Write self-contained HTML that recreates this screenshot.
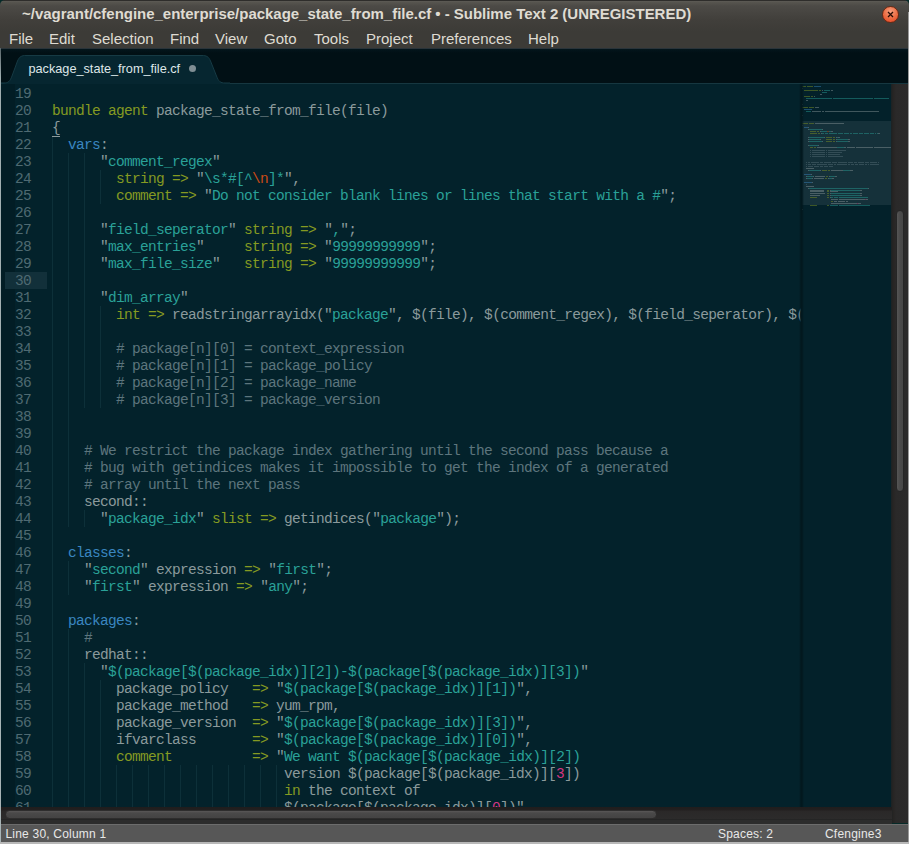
<!DOCTYPE html>
<html><head><meta charset="utf-8">
<style>
*{margin:0;padding:0;box-sizing:border-box}
html,body{width:909px;height:844px;overflow:hidden;background:#062a28}
body{position:relative;font-family:"Liberation Sans",sans-serif}
#title{position:absolute;left:0;top:0;width:909px;height:49px;background:linear-gradient(#2e2d2b 0px,#2e2d2b 1px,#5e5c57 1px,#57554f 2px,#4c4a46 6px,#413f3b 20px,#3c3b37 32px,#3c3b37 48px,#2a343a 48px,#2a343a 49px);border-radius:5px 5px 0 0}
#title span{position:absolute;left:22px;top:4.5px;font-size:15px;font-weight:700;color:#dfdbd2;white-space:pre;letter-spacing:-0.025px}
#close{position:absolute;left:882px;top:6px;width:17px;height:17px;border-radius:50%;background:radial-gradient(circle at 50% 30%,#f7a080,#ec6a40 55%,#e84a2a 90%);border:1px solid #6a2a14}
#close svg{position:absolute;left:3px;top:3px}
#menu{position:absolute;left:0;top:28px;width:909px;height:20px}
#menu span{position:absolute;top:2px;font-size:15px;color:#dfdbd2;white-space:pre}
#tabbar{position:absolute;left:1px;top:49px;width:907px;height:35px;background:linear-gradient(#03161c,#011015 4px,#011015)}
#tabline{position:absolute;left:1px;top:83px;width:907px;height:1px;background:#163740}
#tab{position:absolute;left:0;top:55px}
#tablabel{position:absolute;left:28.5px;top:61.5px;font-size:12.7px;color:#dfe6e8;white-space:pre}
#tabdot{position:absolute;left:189px;top:65px;width:7px;height:7px;border-radius:50%;background:#7f8e94}
#editor{position:absolute;left:1px;top:84px;width:907px;height:723px;background:#03222b;overflow:hidden}
.ln{position:absolute;left:0;width:30px;height:17px;padding-top:1px;text-align:right;font-family:"Liberation Mono",monospace;font-size:14.5px;letter-spacing:-0.7px;line-height:17px;color:#4f6a72}
.hl{position:absolute;left:4px;width:42px;height:17px;background:#12303a}
#gdark{position:absolute;left:0;top:0;width:14px;height:725px;background:#021d25}
.cl{position:absolute;left:51px;height:17px;padding-top:1px;font-family:"Liberation Mono",monospace;font-size:14.5px;letter-spacing:-0.7px;line-height:17px;white-space:pre;color:#8b9a9c}
.gd{position:absolute;width:1px;height:17px;background:#0d3039}
.t{color:#8b9a9c}.k{color:#859a22}.b{color:#3a86c0}.s{color:#2aa198}.c{color:#5d757d}.o{color:#cb4b16}.m{color:#d33682}
.u{color:#8b9a9c;border-bottom:1px solid #8b9a9c}
#mini{position:absolute;left:801px;top:84px;width:91px;height:723px;background:#03212a;overflow:hidden}
#mdiv{position:absolute;left:799px;top:84px;width:5px;height:723px;background:linear-gradient(to right,rgba(2,20,26,0),#02181e 40%,#02181e 60%,rgba(2,20,26,0))}
#mhl{position:absolute;left:1px;top:37px;width:90px;height:84px;background:#15313a}
#minner{position:absolute;left:1px;top:0;width:90px;height:725px}
#minner i{position:absolute;height:1px;opacity:0.45}
.ml{position:absolute;left:0;height:17px;font-family:"Liberation Mono",monospace;font-size:14.5px;letter-spacing:-0.7px;line-height:17px;white-space:pre;font-weight:700}
#vscroll{position:absolute;left:891px;top:84px;width:17px;height:739px;background:linear-gradient(to right,#1a2224,#262423 2px,#2a2929 5px,#2b2a2a)}
#vthumb{position:absolute;left:896px;top:210px;width:8px;height:282px;border-radius:4px;background:linear-gradient(to right,#555,#4a4a4a 3px,#474747);border:1px solid #262626}
#hscroll{position:absolute;left:1px;top:807px;width:891px;height:17px;background:linear-gradient(#1f1d1d,#221f1f 3px,#2a2828 4px,#2c2b2b 12px,#1e1e1e 12px,#2c2c2c 13px)}
#hthumb{position:absolute;left:5px;top:810px;width:652px;height:9px;border-radius:4.5px;background:linear-gradient(#5a5858,#4a4949 2px,#444343);border:1px solid #2e2d2d}
#status{position:absolute;left:1px;top:824px;width:907px;height:19px;background:#575757;border-top:1px solid #6c6c6c}
#status span{position:absolute;top:1.5px;font-size:12px;letter-spacing:0.2px;color:#e8e8e8;white-space:pre}
#lb{position:absolute;left:0;top:48px;width:1px;height:796px;background:linear-gradient(#5a666a,#a0aeb0 30px,#a8b4b6)}
#rb{position:absolute;left:908px;top:12px;width:1px;height:832px;background:#9a9a9a}
#bb{position:absolute;left:0;top:842px;width:909px;height:2px;background:#b8b8b8}
</style></head><body>
<div id="title"><span>~/vagrant/cfengine_enterprise/package_state_from_file.cf • - Sublime Text 2 (UNREGISTERED)</span></div>
<div id="close"><svg width="9" height="9" viewBox="0 0 9 9"><path d="M2 2L7 7M7 2L2 7" stroke="#2a0c04" stroke-width="1.3"/></svg></div>
<div id="menu">
<span style="left:9px">File</span><span style="left:49px">Edit</span><span style="left:92px">Selection</span><span style="left:170px">Find</span><span style="left:215px">View</span><span style="left:264px">Goto</span><span style="left:314px">Tools</span><span style="left:366px">Project</span><span style="left:431px">Preferences</span><span style="left:528px">Help</span>
</div>
<div id="tabbar"></div>
<div id="tabline"></div>
<svg id="tab" width="230" height="30" viewBox="0 0 230 30"><path d="M0 28 L4 28 C8 28 10 26.5 12 21 L17.5 6 C19.5 1.5 21.5 0.5 26 0.5 L202 0.5 C206.5 0.5 208.5 1.5 210.5 6 L216.5 21 C218.5 26.5 220.5 28 225 28 L232 28 L232 31 L0 31 Z" fill="#062630" stroke="#163a44" stroke-width="1"/></svg>
<div id="tablabel">package_state_from_file.cf</div>
<div id="tabdot"></div>
<div id="editor">
<div id="gdark"></div>
<div class="gd" style="left:51px;top:52px"></div>
<div class="gd" style="left:51px;top:69px"></div>
<div class="gd" style="left:67px;top:69px"></div>
<div class="gd" style="left:83px;top:69px"></div>
<div class="gd" style="left:51px;top:86px"></div>
<div class="gd" style="left:67px;top:86px"></div>
<div class="gd" style="left:83px;top:86px"></div>
<div class="gd" style="left:99px;top:86px"></div>
<div class="gd" style="left:51px;top:103px"></div>
<div class="gd" style="left:67px;top:103px"></div>
<div class="gd" style="left:83px;top:103px"></div>
<div class="gd" style="left:99px;top:103px"></div>
<div class="gd" style="left:51px;top:120px"></div>
<div class="gd" style="left:67px;top:120px"></div>
<div class="gd" style="left:83px;top:120px"></div>
<div class="gd" style="left:51px;top:137px"></div>
<div class="gd" style="left:67px;top:137px"></div>
<div class="gd" style="left:83px;top:137px"></div>
<div class="gd" style="left:51px;top:154px"></div>
<div class="gd" style="left:67px;top:154px"></div>
<div class="gd" style="left:83px;top:154px"></div>
<div class="gd" style="left:51px;top:171px"></div>
<div class="gd" style="left:67px;top:171px"></div>
<div class="gd" style="left:83px;top:171px"></div>
<div class="gd" style="left:51px;top:188px"></div>
<div class="gd" style="left:67px;top:188px"></div>
<div class="gd" style="left:83px;top:188px"></div>
<div class="gd" style="left:51px;top:205px"></div>
<div class="gd" style="left:67px;top:205px"></div>
<div class="gd" style="left:83px;top:205px"></div>
<div class="gd" style="left:51px;top:222px"></div>
<div class="gd" style="left:67px;top:222px"></div>
<div class="gd" style="left:83px;top:222px"></div>
<div class="gd" style="left:99px;top:222px"></div>
<div class="gd" style="left:51px;top:239px"></div>
<div class="gd" style="left:67px;top:239px"></div>
<div class="gd" style="left:83px;top:239px"></div>
<div class="gd" style="left:99px;top:239px"></div>
<div class="gd" style="left:51px;top:256px"></div>
<div class="gd" style="left:67px;top:256px"></div>
<div class="gd" style="left:83px;top:256px"></div>
<div class="gd" style="left:99px;top:256px"></div>
<div class="gd" style="left:51px;top:273px"></div>
<div class="gd" style="left:67px;top:273px"></div>
<div class="gd" style="left:83px;top:273px"></div>
<div class="gd" style="left:99px;top:273px"></div>
<div class="gd" style="left:51px;top:290px"></div>
<div class="gd" style="left:67px;top:290px"></div>
<div class="gd" style="left:83px;top:290px"></div>
<div class="gd" style="left:99px;top:290px"></div>
<div class="gd" style="left:51px;top:307px"></div>
<div class="gd" style="left:67px;top:307px"></div>
<div class="gd" style="left:83px;top:307px"></div>
<div class="gd" style="left:99px;top:307px"></div>
<div class="gd" style="left:51px;top:324px"></div>
<div class="gd" style="left:67px;top:324px"></div>
<div class="gd" style="left:51px;top:341px"></div>
<div class="gd" style="left:67px;top:341px"></div>
<div class="gd" style="left:51px;top:358px"></div>
<div class="gd" style="left:67px;top:358px"></div>
<div class="gd" style="left:51px;top:375px"></div>
<div class="gd" style="left:67px;top:375px"></div>
<div class="gd" style="left:51px;top:392px"></div>
<div class="gd" style="left:67px;top:392px"></div>
<div class="gd" style="left:51px;top:409px"></div>
<div class="gd" style="left:67px;top:409px"></div>
<div class="gd" style="left:51px;top:426px"></div>
<div class="gd" style="left:67px;top:426px"></div>
<div class="gd" style="left:83px;top:426px"></div>
<div class="gd" style="left:51px;top:443px"></div>
<div class="gd" style="left:51px;top:460px"></div>
<div class="gd" style="left:51px;top:477px"></div>
<div class="gd" style="left:67px;top:477px"></div>
<div class="gd" style="left:51px;top:494px"></div>
<div class="gd" style="left:67px;top:494px"></div>
<div class="gd" style="left:51px;top:511px"></div>
<div class="gd" style="left:51px;top:528px"></div>
<div class="gd" style="left:51px;top:545px"></div>
<div class="gd" style="left:67px;top:545px"></div>
<div class="gd" style="left:51px;top:562px"></div>
<div class="gd" style="left:67px;top:562px"></div>
<div class="gd" style="left:51px;top:579px"></div>
<div class="gd" style="left:67px;top:579px"></div>
<div class="gd" style="left:83px;top:579px"></div>
<div class="gd" style="left:51px;top:596px"></div>
<div class="gd" style="left:67px;top:596px"></div>
<div class="gd" style="left:83px;top:596px"></div>
<div class="gd" style="left:99px;top:596px"></div>
<div class="gd" style="left:51px;top:613px"></div>
<div class="gd" style="left:67px;top:613px"></div>
<div class="gd" style="left:83px;top:613px"></div>
<div class="gd" style="left:99px;top:613px"></div>
<div class="gd" style="left:51px;top:630px"></div>
<div class="gd" style="left:67px;top:630px"></div>
<div class="gd" style="left:83px;top:630px"></div>
<div class="gd" style="left:99px;top:630px"></div>
<div class="gd" style="left:51px;top:647px"></div>
<div class="gd" style="left:67px;top:647px"></div>
<div class="gd" style="left:83px;top:647px"></div>
<div class="gd" style="left:99px;top:647px"></div>
<div class="gd" style="left:51px;top:664px"></div>
<div class="gd" style="left:67px;top:664px"></div>
<div class="gd" style="left:83px;top:664px"></div>
<div class="gd" style="left:99px;top:664px"></div>
<div class="gd" style="left:51px;top:681px"></div>
<div class="gd" style="left:67px;top:681px"></div>
<div class="gd" style="left:83px;top:681px"></div>
<div class="gd" style="left:99px;top:681px"></div>
<div class="gd" style="left:115px;top:681px"></div>
<div class="gd" style="left:131px;top:681px"></div>
<div class="gd" style="left:147px;top:681px"></div>
<div class="gd" style="left:163px;top:681px"></div>
<div class="gd" style="left:179px;top:681px"></div>
<div class="gd" style="left:195px;top:681px"></div>
<div class="gd" style="left:211px;top:681px"></div>
<div class="gd" style="left:227px;top:681px"></div>
<div class="gd" style="left:243px;top:681px"></div>
<div class="gd" style="left:259px;top:681px"></div>
<div class="gd" style="left:275px;top:681px"></div>
<div class="gd" style="left:51px;top:698px"></div>
<div class="gd" style="left:67px;top:698px"></div>
<div class="gd" style="left:83px;top:698px"></div>
<div class="gd" style="left:99px;top:698px"></div>
<div class="gd" style="left:115px;top:698px"></div>
<div class="gd" style="left:131px;top:698px"></div>
<div class="gd" style="left:147px;top:698px"></div>
<div class="gd" style="left:163px;top:698px"></div>
<div class="gd" style="left:179px;top:698px"></div>
<div class="gd" style="left:195px;top:698px"></div>
<div class="gd" style="left:211px;top:698px"></div>
<div class="gd" style="left:227px;top:698px"></div>
<div class="gd" style="left:243px;top:698px"></div>
<div class="gd" style="left:259px;top:698px"></div>
<div class="gd" style="left:275px;top:698px"></div>
<div class="gd" style="left:51px;top:715px"></div>
<div class="gd" style="left:67px;top:715px"></div>
<div class="gd" style="left:83px;top:715px"></div>
<div class="gd" style="left:99px;top:715px"></div>
<div class="gd" style="left:115px;top:715px"></div>
<div class="gd" style="left:131px;top:715px"></div>
<div class="gd" style="left:147px;top:715px"></div>
<div class="gd" style="left:163px;top:715px"></div>
<div class="gd" style="left:179px;top:715px"></div>
<div class="gd" style="left:195px;top:715px"></div>
<div class="gd" style="left:211px;top:715px"></div>
<div class="gd" style="left:227px;top:715px"></div>
<div class="gd" style="left:243px;top:715px"></div>
<div class="gd" style="left:259px;top:715px"></div>
<div class="gd" style="left:275px;top:715px"></div>
<div class="ln" style="top:1px">19</div>
<div class="ln" style="top:18px">20</div>
<div class="ln" style="top:35px">21</div>
<div class="ln" style="top:52px">22</div>
<div class="ln" style="top:69px">23</div>
<div class="ln" style="top:86px">24</div>
<div class="ln" style="top:103px">25</div>
<div class="ln" style="top:120px">26</div>
<div class="ln" style="top:137px">27</div>
<div class="ln" style="top:154px">28</div>
<div class="ln" style="top:171px">29</div>
<div class="hl" style="top:188px"></div>
<div class="ln" style="top:188px">30</div>
<div class="ln" style="top:205px">31</div>
<div class="ln" style="top:222px">32</div>
<div class="ln" style="top:239px">33</div>
<div class="ln" style="top:256px">34</div>
<div class="ln" style="top:273px">35</div>
<div class="ln" style="top:290px">36</div>
<div class="ln" style="top:307px">37</div>
<div class="ln" style="top:324px">38</div>
<div class="ln" style="top:341px">39</div>
<div class="ln" style="top:358px">40</div>
<div class="ln" style="top:375px">41</div>
<div class="ln" style="top:392px">42</div>
<div class="ln" style="top:409px">43</div>
<div class="ln" style="top:426px">44</div>
<div class="ln" style="top:443px">45</div>
<div class="ln" style="top:460px">46</div>
<div class="ln" style="top:477px">47</div>
<div class="ln" style="top:494px">48</div>
<div class="ln" style="top:511px">49</div>
<div class="ln" style="top:528px">50</div>
<div class="ln" style="top:545px">51</div>
<div class="ln" style="top:562px">52</div>
<div class="ln" style="top:579px">53</div>
<div class="ln" style="top:596px">54</div>
<div class="ln" style="top:613px">55</div>
<div class="ln" style="top:630px">56</div>
<div class="ln" style="top:647px">57</div>
<div class="ln" style="top:664px">58</div>
<div class="ln" style="top:681px">59</div>
<div class="ln" style="top:698px">60</div>
<div class="ln" style="top:715px">61</div>
<div class="cl" style="top:18px"><span class="k">bundle agent</span><span class="t"> package_state_from_file(file)</span></div>
<div class="cl" style="top:35px"><span class="u">{</span></div>
<div class="cl" style="top:52px"><span class="t">  </span><span class="b">vars</span><span class="t">:</span></div>
<div class="cl" style="top:69px"><span class="t">      </span><span class="t">&quot;</span><span class="s">comment_regex</span><span class="t">&quot;</span></div>
<div class="cl" style="top:86px"><span class="t">        </span><span class="k">string =&gt;</span><span class="t"> </span><span class="t">&quot;</span><span class="s">\s*#[^</span><span class="o">\n</span><span class="s">]*</span><span class="t">&quot;</span><span class="t">,</span></div>
<div class="cl" style="top:103px"><span class="t">        </span><span class="k">comment =&gt;</span><span class="t"> </span><span class="t">&quot;</span><span class="s">Do not consider blank lines or lines that start with a #</span><span class="t">&quot;</span><span class="t">;</span></div>
<div class="cl" style="top:137px"><span class="t">      </span><span class="t">&quot;</span><span class="s">field_seperator</span><span class="t">&quot;</span><span class="t"> </span><span class="k">string =&gt;</span><span class="t"> </span><span class="t">&quot;</span><span class="s">,</span><span class="t">&quot;</span><span class="t">;</span></div>
<div class="cl" style="top:154px"><span class="t">      </span><span class="t">&quot;</span><span class="s">max_entries</span><span class="t">&quot;</span><span class="t">     </span><span class="k">string =&gt;</span><span class="t"> </span><span class="t">&quot;</span><span class="s">99999999999</span><span class="t">&quot;</span><span class="t">;</span></div>
<div class="cl" style="top:171px"><span class="t">      </span><span class="t">&quot;</span><span class="s">max_file_size</span><span class="t">&quot;</span><span class="t">   </span><span class="k">string =&gt;</span><span class="t"> </span><span class="t">&quot;</span><span class="s">99999999999</span><span class="t">&quot;</span><span class="t">;</span></div>
<div class="cl" style="top:205px"><span class="t">      </span><span class="t">&quot;</span><span class="s">dim_array</span><span class="t">&quot;</span></div>
<div class="cl" style="top:222px"><span class="t">        </span><span class="k">int =&gt;</span><span class="t"> readstringarrayidx(</span><span class="t">&quot;</span><span class="s">package</span><span class="t">&quot;</span><span class="t">, $(file), $(comment_regex), $(field_seperator), $(</span></div>
<div class="cl" style="top:256px"><span class="t">        </span><span class="c"># package[n][0] = context_expression</span></div>
<div class="cl" style="top:273px"><span class="t">        </span><span class="c"># package[n][1] = package_policy</span></div>
<div class="cl" style="top:290px"><span class="t">        </span><span class="c"># package[n][2] = package_name</span></div>
<div class="cl" style="top:307px"><span class="t">        </span><span class="c"># package[n][3] = package_version</span></div>
<div class="cl" style="top:358px"><span class="t">    </span><span class="c"># We restrict the package index gathering until the second pass because a</span></div>
<div class="cl" style="top:375px"><span class="t">    </span><span class="c"># bug with getindices makes it impossible to get the index of a generated</span></div>
<div class="cl" style="top:392px"><span class="t">    </span><span class="c"># array until the next pass</span></div>
<div class="cl" style="top:409px"><span class="t">    second::</span></div>
<div class="cl" style="top:426px"><span class="t">      </span><span class="t">&quot;</span><span class="s">package_idx</span><span class="t">&quot;</span><span class="t"> </span><span class="k">slist =&gt;</span><span class="t"> getindices(</span><span class="t">&quot;</span><span class="s">package</span><span class="t">&quot;</span><span class="t">);</span></div>
<div class="cl" style="top:460px"><span class="t">  </span><span class="b">classes</span><span class="t">:</span></div>
<div class="cl" style="top:477px"><span class="t">    </span><span class="t">&quot;</span><span class="s">second</span><span class="t">&quot;</span><span class="t"> expression </span><span class="k">=&gt;</span><span class="t"> </span><span class="t">&quot;</span><span class="s">first</span><span class="t">&quot;</span><span class="t">;</span></div>
<div class="cl" style="top:494px"><span class="t">    </span><span class="t">&quot;</span><span class="s">first</span><span class="t">&quot;</span><span class="t"> expression </span><span class="k">=&gt;</span><span class="t"> </span><span class="t">&quot;</span><span class="s">any</span><span class="t">&quot;</span><span class="t">;</span></div>
<div class="cl" style="top:528px"><span class="t">  </span><span class="b">packages</span><span class="t">:</span></div>
<div class="cl" style="top:545px"><span class="t">    </span><span class="c">#</span></div>
<div class="cl" style="top:562px"><span class="t">    redhat::</span></div>
<div class="cl" style="top:579px"><span class="t">      </span><span class="t">&quot;</span><span class="s">$(package[$(package_idx)][2])-$(package[$(package_idx)][3])</span><span class="t">&quot;</span></div>
<div class="cl" style="top:596px"><span class="t">        package_policy   </span><span class="k">=&gt;</span><span class="t"> </span><span class="t">&quot;</span><span class="s">$(package[$(package_idx)][1])</span><span class="t">&quot;</span><span class="t">,</span></div>
<div class="cl" style="top:613px"><span class="t">        package_method   </span><span class="k">=&gt;</span><span class="t"> yum_rpm,</span></div>
<div class="cl" style="top:630px"><span class="t">        package_version  </span><span class="k">=&gt;</span><span class="t"> </span><span class="t">&quot;</span><span class="s">$(package[$(package_idx)][3])</span><span class="t">&quot;</span><span class="t">,</span></div>
<div class="cl" style="top:647px"><span class="t">        ifvarclass       </span><span class="k">=&gt;</span><span class="t"> </span><span class="t">&quot;</span><span class="s">$(package[$(package_idx)][0])</span><span class="t">&quot;</span><span class="t">,</span></div>
<div class="cl" style="top:664px"><span class="t">        </span><span class="k">comment</span><span class="t">          </span><span class="k">=&gt;</span><span class="t"> </span><span class="t">&quot;</span><span class="s">We want $(package[$(package_idx)][2])</span></div>
<div class="cl" style="top:681px"><span class="t">                             version $(package[$(package_idx)][</span><span class="m">3</span><span class="t">])</span></div>
<div class="cl" style="top:698px"><span class="t">                             </span><span class="k">in</span><span class="t"> the context of</span></div>
<div class="cl" style="top:715px"><span class="t">                             $(package[$(package_idx)][</span><span class="m">0</span><span class="t">])&quot;</span></div>
</div>
<div id="mini"><div id="mhl"></div><div id="minner">
<i style="left:0px;top:2.00px;width:4px;background:#859a22"></i>
<i style="left:5px;top:2.00px;width:6px;background:#859a22"></i>
<i style="left:12px;top:2.00px;width:7px;background:#3a86c0"></i>
<i style="left:0px;top:3.95px;width:1px;background:#8b9a9c"></i>
<i style="left:2px;top:5.91px;width:14px;background:#859a22"></i>
<i style="left:17px;top:5.91px;width:2px;background:#859a22"></i>
<i style="left:20px;top:5.91px;width:1px;background:#8b9a9c"></i>
<i style="left:22px;top:5.91px;width:6px;background:#2aa198"></i>
<i style="left:29px;top:5.91px;width:2px;background:#8b9a9c"></i>
<i style="left:20px;top:7.86px;width:5px;background:#2aa198"></i>
<i style="left:18px;top:9.81px;width:2px;background:#8b9a9c"></i>
<i style="left:2px;top:11.77px;width:6px;background:#859a22"></i>
<i style="left:9px;top:11.77px;width:2px;background:#859a22"></i>
<i style="left:12px;top:11.77px;width:1px;background:#8b9a9c"></i>
<i style="left:4px;top:13.72px;width:26px;background:#2aa198"></i>
<i style="left:31px;top:13.72px;width:40px;background:#2aa198"></i>
<i style="left:72px;top:13.72px;width:15px;background:#2aa198"></i>
<i style="left:4px;top:15.67px;width:2px;background:#8b9a9c"></i>
<i style="left:0px;top:19.58px;width:1px;background:#8b9a9c"></i>
<i style="left:0px;top:23.48px;width:6px;background:#859a22"></i>
<i style="left:7px;top:23.48px;width:5px;background:#859a22"></i>
<i style="left:13px;top:23.48px;width:4px;background:#8b9a9c"></i>
<i style="left:2px;top:25.44px;width:8px;background:#3a86c0"></i>
<i style="left:4px;top:27.39px;width:5px;background:#2aa198"></i>
<i style="left:10px;top:27.39px;width:9px;background:#8b9a9c"></i>
<i style="left:20px;top:27.39px;width:2px;background:#8b9a9c"></i>
<i style="left:23px;top:27.39px;width:54px;background:#8b9a9c"></i>
<i style="left:0px;top:31.30px;width:1px;background:#8b9a9c"></i>
<i style="left:0px;top:39.11px;width:6px;background:#859a22"></i>
<i style="left:7px;top:39.11px;width:5px;background:#859a22"></i>
<i style="left:13px;top:39.11px;width:29px;background:#8b9a9c"></i>
<i style="left:0px;top:41.06px;width:1px;background:#8b9a9c"></i>
<i style="left:2px;top:43.01px;width:4px;background:#3a86c0"></i>
<i style="left:6px;top:43.01px;width:1px;background:#8b9a9c"></i>
<i style="left:6px;top:44.97px;width:1px;background:#8b9a9c"></i>
<i style="left:7px;top:44.97px;width:13px;background:#2aa198"></i>
<i style="left:20px;top:44.97px;width:1px;background:#8b9a9c"></i>
<i style="left:8px;top:46.92px;width:6px;background:#859a22"></i>
<i style="left:15px;top:46.92px;width:2px;background:#859a22"></i>
<i style="left:18px;top:46.92px;width:1px;background:#8b9a9c"></i>
<i style="left:19px;top:46.92px;width:6px;background:#2aa198"></i>
<i style="left:25px;top:46.92px;width:2px;background:#cb4b16"></i>
<i style="left:27px;top:46.92px;width:2px;background:#2aa198"></i>
<i style="left:29px;top:46.92px;width:1px;background:#8b9a9c"></i>
<i style="left:30px;top:46.92px;width:1px;background:#8b9a9c"></i>
<i style="left:8px;top:48.87px;width:7px;background:#859a22"></i>
<i style="left:16px;top:48.87px;width:2px;background:#859a22"></i>
<i style="left:19px;top:48.87px;width:1px;background:#8b9a9c"></i>
<i style="left:20px;top:48.87px;width:2px;background:#2aa198"></i>
<i style="left:23px;top:48.87px;width:3px;background:#2aa198"></i>
<i style="left:27px;top:48.87px;width:8px;background:#2aa198"></i>
<i style="left:36px;top:48.87px;width:5px;background:#2aa198"></i>
<i style="left:42px;top:48.87px;width:5px;background:#2aa198"></i>
<i style="left:48px;top:48.87px;width:2px;background:#2aa198"></i>
<i style="left:51px;top:48.87px;width:5px;background:#2aa198"></i>
<i style="left:57px;top:48.87px;width:4px;background:#2aa198"></i>
<i style="left:62px;top:48.87px;width:5px;background:#2aa198"></i>
<i style="left:68px;top:48.87px;width:4px;background:#2aa198"></i>
<i style="left:73px;top:48.87px;width:1px;background:#2aa198"></i>
<i style="left:75px;top:48.87px;width:1px;background:#2aa198"></i>
<i style="left:76px;top:48.87px;width:1px;background:#8b9a9c"></i>
<i style="left:77px;top:48.87px;width:1px;background:#8b9a9c"></i>
<i style="left:6px;top:52.78px;width:1px;background:#8b9a9c"></i>
<i style="left:7px;top:52.78px;width:15px;background:#2aa198"></i>
<i style="left:22px;top:52.78px;width:1px;background:#8b9a9c"></i>
<i style="left:24px;top:52.78px;width:6px;background:#859a22"></i>
<i style="left:31px;top:52.78px;width:2px;background:#859a22"></i>
<i style="left:34px;top:52.78px;width:1px;background:#8b9a9c"></i>
<i style="left:35px;top:52.78px;width:1px;background:#2aa198"></i>
<i style="left:36px;top:52.78px;width:1px;background:#8b9a9c"></i>
<i style="left:37px;top:52.78px;width:1px;background:#8b9a9c"></i>
<i style="left:6px;top:54.73px;width:1px;background:#8b9a9c"></i>
<i style="left:7px;top:54.73px;width:11px;background:#2aa198"></i>
<i style="left:18px;top:54.73px;width:1px;background:#8b9a9c"></i>
<i style="left:24px;top:54.73px;width:6px;background:#859a22"></i>
<i style="left:31px;top:54.73px;width:2px;background:#859a22"></i>
<i style="left:34px;top:54.73px;width:1px;background:#8b9a9c"></i>
<i style="left:35px;top:54.73px;width:11px;background:#2aa198"></i>
<i style="left:46px;top:54.73px;width:1px;background:#8b9a9c"></i>
<i style="left:47px;top:54.73px;width:1px;background:#8b9a9c"></i>
<i style="left:6px;top:56.68px;width:1px;background:#8b9a9c"></i>
<i style="left:7px;top:56.68px;width:13px;background:#2aa198"></i>
<i style="left:20px;top:56.68px;width:1px;background:#8b9a9c"></i>
<i style="left:24px;top:56.68px;width:6px;background:#859a22"></i>
<i style="left:31px;top:56.68px;width:2px;background:#859a22"></i>
<i style="left:34px;top:56.68px;width:1px;background:#8b9a9c"></i>
<i style="left:35px;top:56.68px;width:11px;background:#2aa198"></i>
<i style="left:46px;top:56.68px;width:1px;background:#8b9a9c"></i>
<i style="left:47px;top:56.68px;width:1px;background:#8b9a9c"></i>
<i style="left:6px;top:60.59px;width:1px;background:#8b9a9c"></i>
<i style="left:7px;top:60.59px;width:9px;background:#2aa198"></i>
<i style="left:16px;top:60.59px;width:1px;background:#8b9a9c"></i>
<i style="left:8px;top:62.54px;width:3px;background:#859a22"></i>
<i style="left:12px;top:62.54px;width:2px;background:#859a22"></i>
<i style="left:15px;top:62.54px;width:19px;background:#8b9a9c"></i>
<i style="left:34px;top:62.54px;width:1px;background:#8b9a9c"></i>
<i style="left:35px;top:62.54px;width:7px;background:#2aa198"></i>
<i style="left:42px;top:62.54px;width:1px;background:#8b9a9c"></i>
<i style="left:43px;top:62.54px;width:1px;background:#8b9a9c"></i>
<i style="left:45px;top:62.54px;width:8px;background:#8b9a9c"></i>
<i style="left:54px;top:62.54px;width:17px;background:#8b9a9c"></i>
<i style="left:72px;top:62.54px;width:18px;background:#8b9a9c"></i>
<i style="left:8px;top:66.45px;width:1px;background:#58707a"></i>
<i style="left:10px;top:66.45px;width:13px;background:#58707a"></i>
<i style="left:24px;top:66.45px;width:1px;background:#58707a"></i>
<i style="left:26px;top:66.45px;width:18px;background:#58707a"></i>
<i style="left:8px;top:68.40px;width:1px;background:#58707a"></i>
<i style="left:10px;top:68.40px;width:13px;background:#58707a"></i>
<i style="left:24px;top:68.40px;width:1px;background:#58707a"></i>
<i style="left:26px;top:68.40px;width:14px;background:#58707a"></i>
<i style="left:8px;top:70.36px;width:1px;background:#58707a"></i>
<i style="left:10px;top:70.36px;width:13px;background:#58707a"></i>
<i style="left:24px;top:70.36px;width:1px;background:#58707a"></i>
<i style="left:26px;top:70.36px;width:12px;background:#58707a"></i>
<i style="left:8px;top:72.31px;width:1px;background:#58707a"></i>
<i style="left:10px;top:72.31px;width:13px;background:#58707a"></i>
<i style="left:24px;top:72.31px;width:1px;background:#58707a"></i>
<i style="left:26px;top:72.31px;width:15px;background:#58707a"></i>
<i style="left:4px;top:78.17px;width:1px;background:#58707a"></i>
<i style="left:6px;top:78.17px;width:2px;background:#58707a"></i>
<i style="left:9px;top:78.17px;width:8px;background:#58707a"></i>
<i style="left:18px;top:78.17px;width:3px;background:#58707a"></i>
<i style="left:22px;top:78.17px;width:7px;background:#58707a"></i>
<i style="left:30px;top:78.17px;width:5px;background:#58707a"></i>
<i style="left:36px;top:78.17px;width:9px;background:#58707a"></i>
<i style="left:46px;top:78.17px;width:5px;background:#58707a"></i>
<i style="left:52px;top:78.17px;width:3px;background:#58707a"></i>
<i style="left:56px;top:78.17px;width:6px;background:#58707a"></i>
<i style="left:63px;top:78.17px;width:4px;background:#58707a"></i>
<i style="left:68px;top:78.17px;width:7px;background:#58707a"></i>
<i style="left:76px;top:78.17px;width:1px;background:#58707a"></i>
<i style="left:4px;top:80.12px;width:1px;background:#58707a"></i>
<i style="left:6px;top:80.12px;width:3px;background:#58707a"></i>
<i style="left:10px;top:80.12px;width:4px;background:#58707a"></i>
<i style="left:15px;top:80.12px;width:10px;background:#58707a"></i>
<i style="left:26px;top:80.12px;width:5px;background:#58707a"></i>
<i style="left:32px;top:80.12px;width:2px;background:#58707a"></i>
<i style="left:35px;top:80.12px;width:10px;background:#58707a"></i>
<i style="left:46px;top:80.12px;width:2px;background:#58707a"></i>
<i style="left:49px;top:80.12px;width:3px;background:#58707a"></i>
<i style="left:53px;top:80.12px;width:3px;background:#58707a"></i>
<i style="left:57px;top:80.12px;width:5px;background:#58707a"></i>
<i style="left:63px;top:80.12px;width:2px;background:#58707a"></i>
<i style="left:66px;top:80.12px;width:1px;background:#58707a"></i>
<i style="left:68px;top:80.12px;width:9px;background:#58707a"></i>
<i style="left:4px;top:82.07px;width:1px;background:#58707a"></i>
<i style="left:6px;top:82.07px;width:5px;background:#58707a"></i>
<i style="left:12px;top:82.07px;width:5px;background:#58707a"></i>
<i style="left:18px;top:82.07px;width:3px;background:#58707a"></i>
<i style="left:22px;top:82.07px;width:4px;background:#58707a"></i>
<i style="left:27px;top:82.07px;width:4px;background:#58707a"></i>
<i style="left:4px;top:84.03px;width:8px;background:#8b9a9c"></i>
<i style="left:6px;top:85.98px;width:1px;background:#8b9a9c"></i>
<i style="left:7px;top:85.98px;width:11px;background:#2aa198"></i>
<i style="left:18px;top:85.98px;width:1px;background:#8b9a9c"></i>
<i style="left:20px;top:85.98px;width:5px;background:#859a22"></i>
<i style="left:26px;top:85.98px;width:2px;background:#859a22"></i>
<i style="left:29px;top:85.98px;width:11px;background:#8b9a9c"></i>
<i style="left:40px;top:85.98px;width:1px;background:#8b9a9c"></i>
<i style="left:41px;top:85.98px;width:7px;background:#2aa198"></i>
<i style="left:48px;top:85.98px;width:1px;background:#8b9a9c"></i>
<i style="left:49px;top:85.98px;width:2px;background:#8b9a9c"></i>
<i style="left:2px;top:89.89px;width:7px;background:#3a86c0"></i>
<i style="left:9px;top:89.89px;width:1px;background:#8b9a9c"></i>
<i style="left:4px;top:91.84px;width:1px;background:#8b9a9c"></i>
<i style="left:5px;top:91.84px;width:6px;background:#2aa198"></i>
<i style="left:11px;top:91.84px;width:1px;background:#8b9a9c"></i>
<i style="left:13px;top:91.84px;width:10px;background:#8b9a9c"></i>
<i style="left:24px;top:91.84px;width:2px;background:#859a22"></i>
<i style="left:27px;top:91.84px;width:1px;background:#8b9a9c"></i>
<i style="left:28px;top:91.84px;width:5px;background:#2aa198"></i>
<i style="left:33px;top:91.84px;width:1px;background:#8b9a9c"></i>
<i style="left:34px;top:91.84px;width:1px;background:#8b9a9c"></i>
<i style="left:4px;top:93.79px;width:1px;background:#8b9a9c"></i>
<i style="left:5px;top:93.79px;width:5px;background:#2aa198"></i>
<i style="left:10px;top:93.79px;width:1px;background:#8b9a9c"></i>
<i style="left:12px;top:93.79px;width:10px;background:#8b9a9c"></i>
<i style="left:23px;top:93.79px;width:2px;background:#859a22"></i>
<i style="left:26px;top:93.79px;width:1px;background:#8b9a9c"></i>
<i style="left:27px;top:93.79px;width:3px;background:#2aa198"></i>
<i style="left:30px;top:93.79px;width:1px;background:#8b9a9c"></i>
<i style="left:31px;top:93.79px;width:1px;background:#8b9a9c"></i>
<i style="left:2px;top:97.70px;width:8px;background:#3a86c0"></i>
<i style="left:10px;top:97.70px;width:1px;background:#8b9a9c"></i>
<i style="left:4px;top:99.65px;width:1px;background:#58707a"></i>
<i style="left:4px;top:101.60px;width:8px;background:#8b9a9c"></i>
<i style="left:6px;top:103.56px;width:1px;background:#8b9a9c"></i>
<i style="left:7px;top:103.56px;width:59px;background:#2aa198"></i>
<i style="left:66px;top:103.56px;width:1px;background:#8b9a9c"></i>
<i style="left:8px;top:105.51px;width:14px;background:#8b9a9c"></i>
<i style="left:25px;top:105.51px;width:2px;background:#859a22"></i>
<i style="left:28px;top:105.51px;width:1px;background:#8b9a9c"></i>
<i style="left:29px;top:105.51px;width:29px;background:#2aa198"></i>
<i style="left:58px;top:105.51px;width:1px;background:#8b9a9c"></i>
<i style="left:59px;top:105.51px;width:1px;background:#8b9a9c"></i>
<i style="left:8px;top:107.46px;width:14px;background:#8b9a9c"></i>
<i style="left:25px;top:107.46px;width:2px;background:#859a22"></i>
<i style="left:28px;top:107.46px;width:8px;background:#8b9a9c"></i>
<i style="left:8px;top:109.42px;width:15px;background:#8b9a9c"></i>
<i style="left:25px;top:109.42px;width:2px;background:#859a22"></i>
<i style="left:28px;top:109.42px;width:1px;background:#8b9a9c"></i>
<i style="left:29px;top:109.42px;width:29px;background:#2aa198"></i>
<i style="left:58px;top:109.42px;width:1px;background:#8b9a9c"></i>
<i style="left:59px;top:109.42px;width:1px;background:#8b9a9c"></i>
<i style="left:8px;top:111.37px;width:10px;background:#8b9a9c"></i>
<i style="left:25px;top:111.37px;width:2px;background:#859a22"></i>
<i style="left:28px;top:111.37px;width:1px;background:#8b9a9c"></i>
<i style="left:29px;top:111.37px;width:29px;background:#2aa198"></i>
<i style="left:58px;top:111.37px;width:1px;background:#8b9a9c"></i>
<i style="left:59px;top:111.37px;width:1px;background:#8b9a9c"></i>
<i style="left:8px;top:113.32px;width:7px;background:#859a22"></i>
<i style="left:25px;top:113.32px;width:2px;background:#859a22"></i>
<i style="left:28px;top:113.32px;width:1px;background:#8b9a9c"></i>
<i style="left:29px;top:113.32px;width:2px;background:#2aa198"></i>
<i style="left:32px;top:113.32px;width:4px;background:#2aa198"></i>
<i style="left:37px;top:113.32px;width:29px;background:#2aa198"></i>
<i style="left:29px;top:115.27px;width:7px;background:#8b9a9c"></i>
<i style="left:37px;top:115.27px;width:26px;background:#8b9a9c"></i>
<i style="left:63px;top:115.27px;width:1px;background:#d33682"></i>
<i style="left:64px;top:115.27px;width:2px;background:#8b9a9c"></i>
<i style="left:29px;top:117.23px;width:2px;background:#859a22"></i>
<i style="left:32px;top:117.23px;width:3px;background:#8b9a9c"></i>
<i style="left:36px;top:117.23px;width:7px;background:#8b9a9c"></i>
<i style="left:44px;top:117.23px;width:2px;background:#8b9a9c"></i>
<i style="left:29px;top:119.18px;width:26px;background:#8b9a9c"></i>
<i style="left:55px;top:119.18px;width:1px;background:#d33682"></i>
<i style="left:56px;top:119.18px;width:3px;background:#8b9a9c"></i>
<i style="left:8px;top:121.13px;width:7px;background:#859a22"></i>
<i style="left:25px;top:121.13px;width:2px;background:#859a22"></i>
<i style="left:28px;top:121.13px;width:8px;background:#2aa198"></i>
<i style="left:37px;top:121.13px;width:31px;background:#2aa198"></i>
<i style="left:0px;top:125.04px;width:1px;background:#8b9a9c"></i>
</div></div>
<div id="mdiv"></div>
<div id="vscroll"></div>
<div id="vthumb"></div>
<div id="hscroll"></div>
<div id="hthumb"></div>
<div id="status"><span style="left:4.5px">Line 30, Column 1</span><span style="left:717px">Spaces: 2</span><span style="left:824px">Cfengine3</span></div>
<div id="lb"></div><div id="rb"></div><div id="bb"></div>
</body></html>
